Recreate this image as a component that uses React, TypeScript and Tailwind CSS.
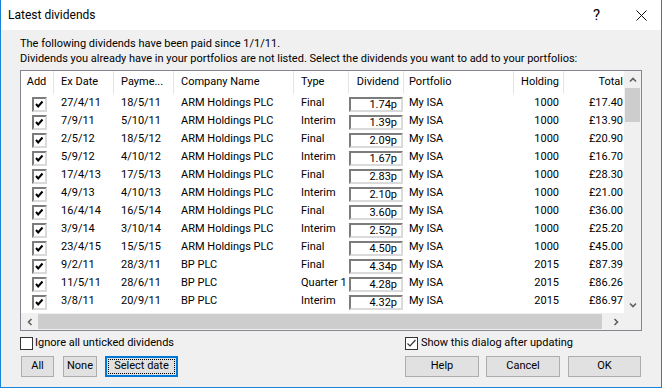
import { ReactNode } from "react";

type Row = [string, string, string, string, string, string, string, string];

const rows: Row[] = [
  ["27/4/11", "18/5/11", "ARM Holdings PLC", "Final", "1.74p", "My ISA", "1000", "£17.40"],
  ["7/9/11", "5/10/11", "ARM Holdings PLC", "Interim", "1.39p", "My ISA", "1000", "£13.90"],
  ["2/5/12", "18/5/12", "ARM Holdings PLC", "Final", "2.09p", "My ISA", "1000", "£20.90"],
  ["5/9/12", "4/10/12", "ARM Holdings PLC", "Interim", "1.67p", "My ISA", "1000", "£16.70"],
  ["17/4/13", "17/5/13", "ARM Holdings PLC", "Final", "2.83p", "My ISA", "1000", "£28.30"],
  ["4/9/13", "4/10/13", "ARM Holdings PLC", "Interim", "2.10p", "My ISA", "1000", "£21.00"],
  ["16/4/14", "16/5/14", "ARM Holdings PLC", "Final", "3.60p", "My ISA", "1000", "£36.00"],
  ["3/9/14", "3/10/14", "ARM Holdings PLC", "Interim", "2.52p", "My ISA", "1000", "£25.20"],
  ["23/4/15", "15/5/15", "ARM Holdings PLC", "Final", "4.50p", "My ISA", "1000", "£45.00"],
  ["9/2/11", "28/3/11", "BP PLC", "Final", "4.34p", "My ISA", "2015", "£87.39"],
  ["11/5/11", "28/6/11", "BP PLC", "Quarter 1", "4.28p", "My ISA", "2015", "£86.26"],
  ["3/8/11", "20/9/11", "BP PLC", "Interim", "4.32p", "My ISA", "2015", "£86.97"],
  // next row only peeks out above the scrollbar, its text is hidden
  ["", "", "", "", "", "", "", ""],
];

const cols = "grid grid-cols-[33px_60px_60px_120px_55px_55px_110px_50px_60px]";

const Chevron = ({ dir }: { dir: "up" | "down" | "left" | "right" }) => {
  const pts = {
    up: "1,5.5 4,2.5 7,5.5",
    down: "1,2.5 4,5.5 7,2.5",
    left: "5.5,1 2.5,4 5.5,7",
    right: "2.5,1 5.5,4 2.5,7",
  }[dir];
  return (
    <svg width="8" height="8" viewBox="0 0 8 8">
      <polyline points={pts} fill="none" stroke="#606060" strokeWidth="1.6" />
    </svg>
  );
};

const Tick = ({ thin }: { thin?: boolean }) => (
  <svg width="11" height="11" viewBox="0 0 11 11" className="block">
    <polyline
      points={thin ? "1.5,5.5 4,8 9.5,2" : "2,5 4.2,7.5 8.5,2.5"}
      fill="none"
      stroke={thin ? "#333" : "#000"}
      strokeWidth={thin ? 1.2 : 2}
    />
  </svg>
);

const SunkenCheck = () => (
  <div className="w-[15px] h-[15px] bg-white border-2 border-t-[#7c7c7c] border-l-[#7c7c7c] border-b-[#dadada] border-r-[#dadada] flex items-center justify-center">
    <Tick />
  </div>
);

const FlatCheck = ({ checked }: { checked?: boolean }) => (
  <div className="w-[13px] h-[13px] bg-white border border-[#333333] flex items-center justify-center">
    {checked && <Tick thin />}
  </div>
);

const Button = ({ children, width, focused }: { children: ReactNode; width: string; focused?: boolean }) => (
  <div
    className={`${width} h-[21px] flex items-center justify-center bg-[#e1e1e1] ${
      focused
        ? "border-2 border-[#0078d7] outline-1 outline-dotted outline-black -outline-offset-4"
        : "border border-[#adadad]"
    }`}
  >
    {children}
  </div>
);

const HeaderCell = ({ children, className = "" }: { children?: ReactNode; className?: string }) => (
  <div className={`flex items-center border-r border-[#e5e5e5] ${className}`}>{children}</div>
);

export default function App() {
  return (
    <div className="w-[662px] h-[388px] border-x border-b border-[#1883d7] flex flex-col bg-[#f0f0f0] text-[11px] text-black font-[Roboto,'Liberation_Sans',sans-serif]">
      <div className="h-[30px] bg-white flex items-center pl-[7px] pr-[14px]">
        <span className="text-[12px] flex-1">Latest dividends</span>
        <span className="text-[15px] mr-[36px]">?</span>
        <svg width="11" height="11" viewBox="0 0 11 11">
          <path d="M0.5 0.5 L10.5 10.5 M10.5 0.5 L0.5 10.5" stroke="#111" strokeWidth="1" />
        </svg>
      </div>

      <div className="flex-1 flex flex-col px-[19px] pt-[6px]">
        <p className="leading-[15px]">The following dividends have been paid since 1/1/11.</p>
        <p className="leading-[15px]">
          Dividends you already have in your portfolios are not listed. Select the dividends you want to add to your portfolios:
        </p>

        <div className="mt-[4px] h-[261px] border border-[#828790] bg-white flex flex-col">
          <div className="flex h-[242px]">
            <div className="w-[603px] overflow-hidden flex flex-col">
              <div className={`${cols} h-[23px]`}>
                <HeaderCell className="justify-center pr-[1px]">Add</HeaderCell>
                <HeaderCell className="pl-[7px]">Ex Date</HeaderCell>
                <HeaderCell className="pl-[7px]">Payme...</HeaderCell>
                <HeaderCell className="pl-[7px]">Company Name</HeaderCell>
                <HeaderCell className="pl-[7px]">Type</HeaderCell>
                <HeaderCell className="justify-end pr-[4px]">Dividend</HeaderCell>
                <HeaderCell className="pl-[5px]">Portfolio</HeaderCell>
                <HeaderCell className="justify-end pr-[4px]">Holding</HeaderCell>
                <div className="flex items-center justify-end pr-[1px]">Total</div>
              </div>
              <div className="h-[219px] overflow-hidden">
                {rows.map((r, i) => (
                  <div key={i} className={`${cols} h-[18px] leading-[18px] whitespace-nowrap`}>
                    <div className="pl-[11px] pt-[3px]">
                      <SunkenCheck />
                    </div>
                    <div className="pl-[7px]">{r[0]}</div>
                    <div className="pl-[7px]">{r[1]}</div>
                    <div className="pl-[7px]">{r[2]}</div>
                    <div className="pl-[7px] overflow-hidden">{r[3]}</div>
                    <div className="pt-[3px]">
                      <div className="w-[54px] h-[15px] bg-white border-2 border-t-[#7c7c7c] border-l-[#7c7c7c] border-b-[#dadada] border-r-[#dadada] flex items-center justify-end pr-[4px] leading-[11px]">
                        {r[4]}
                      </div>
                    </div>
                    <div className="pl-[5px]">{r[5]}</div>
                    <div className="text-right pr-[5px]">{r[6]}</div>
                    <div className="text-right pr-[1px]">{r[7]}</div>
                  </div>
                ))}
              </div>
            </div>
            <div className="w-[17px] bg-[#f0f0f0] flex flex-col">
              <div className="h-[17px] flex items-center justify-center">
                <Chevron dir="up" />
              </div>
              <div className="h-[34px] mx-[1px] bg-[#cdcdcd]" />
              <div className="flex-1" />
              <div className="h-[17px] flex items-center justify-center">
                <Chevron dir="down" />
              </div>
            </div>
          </div>
          <div className="flex h-[17px]">
            <div className="w-[603px] bg-[#f0f0f0] flex items-center">
              <div className="w-[17px] h-[17px] flex items-center justify-center">
                <Chevron dir="left" />
              </div>
              <div className="w-[564px] h-[15px] bg-[#cdcdcd]" />
              <div className="flex-1" />
              <div className="w-[17px] h-[17px] flex items-center justify-center">
                <Chevron dir="right" />
              </div>
            </div>
            <div className="w-[17px] bg-[#f0f0f0]" />
          </div>
        </div>

        <div className="flex">
          <div className="w-[385px] flex flex-col">
            <div className="mt-[6px] h-[13px] flex items-center gap-[2px]">
              <FlatCheck />
              <span>Ignore all unticked dividends</span>
            </div>
            <div className="mt-[6px] flex pl-[1px]">
              <Button width="w-[33px]">All</Button>
              <div className="ml-[9px]">
                <Button width="w-[34px]">None</Button>
              </div>
              <div className="ml-[8px]">
                <Button width="w-[73px]" focused>
                  Select date
                </Button>
              </div>
            </div>
          </div>
          <div className="flex-1 flex flex-col">
            <div className="mt-[6px] h-[13px] flex items-center gap-[3px]">
              <FlatCheck checked />
              <span>Show this dialog after updating</span>
            </div>
            <div className="mt-[6px] flex">
              <Button width="w-[74px]">Help</Button>
              <div className="ml-[7px]">
                <Button width="w-[74px]">Cancel</Button>
              </div>
              <div className="ml-[8px]">
                <Button width="w-[73px]">OK</Button>
              </div>
            </div>
          </div>
        </div>
      </div>
    </div>
  );
}
